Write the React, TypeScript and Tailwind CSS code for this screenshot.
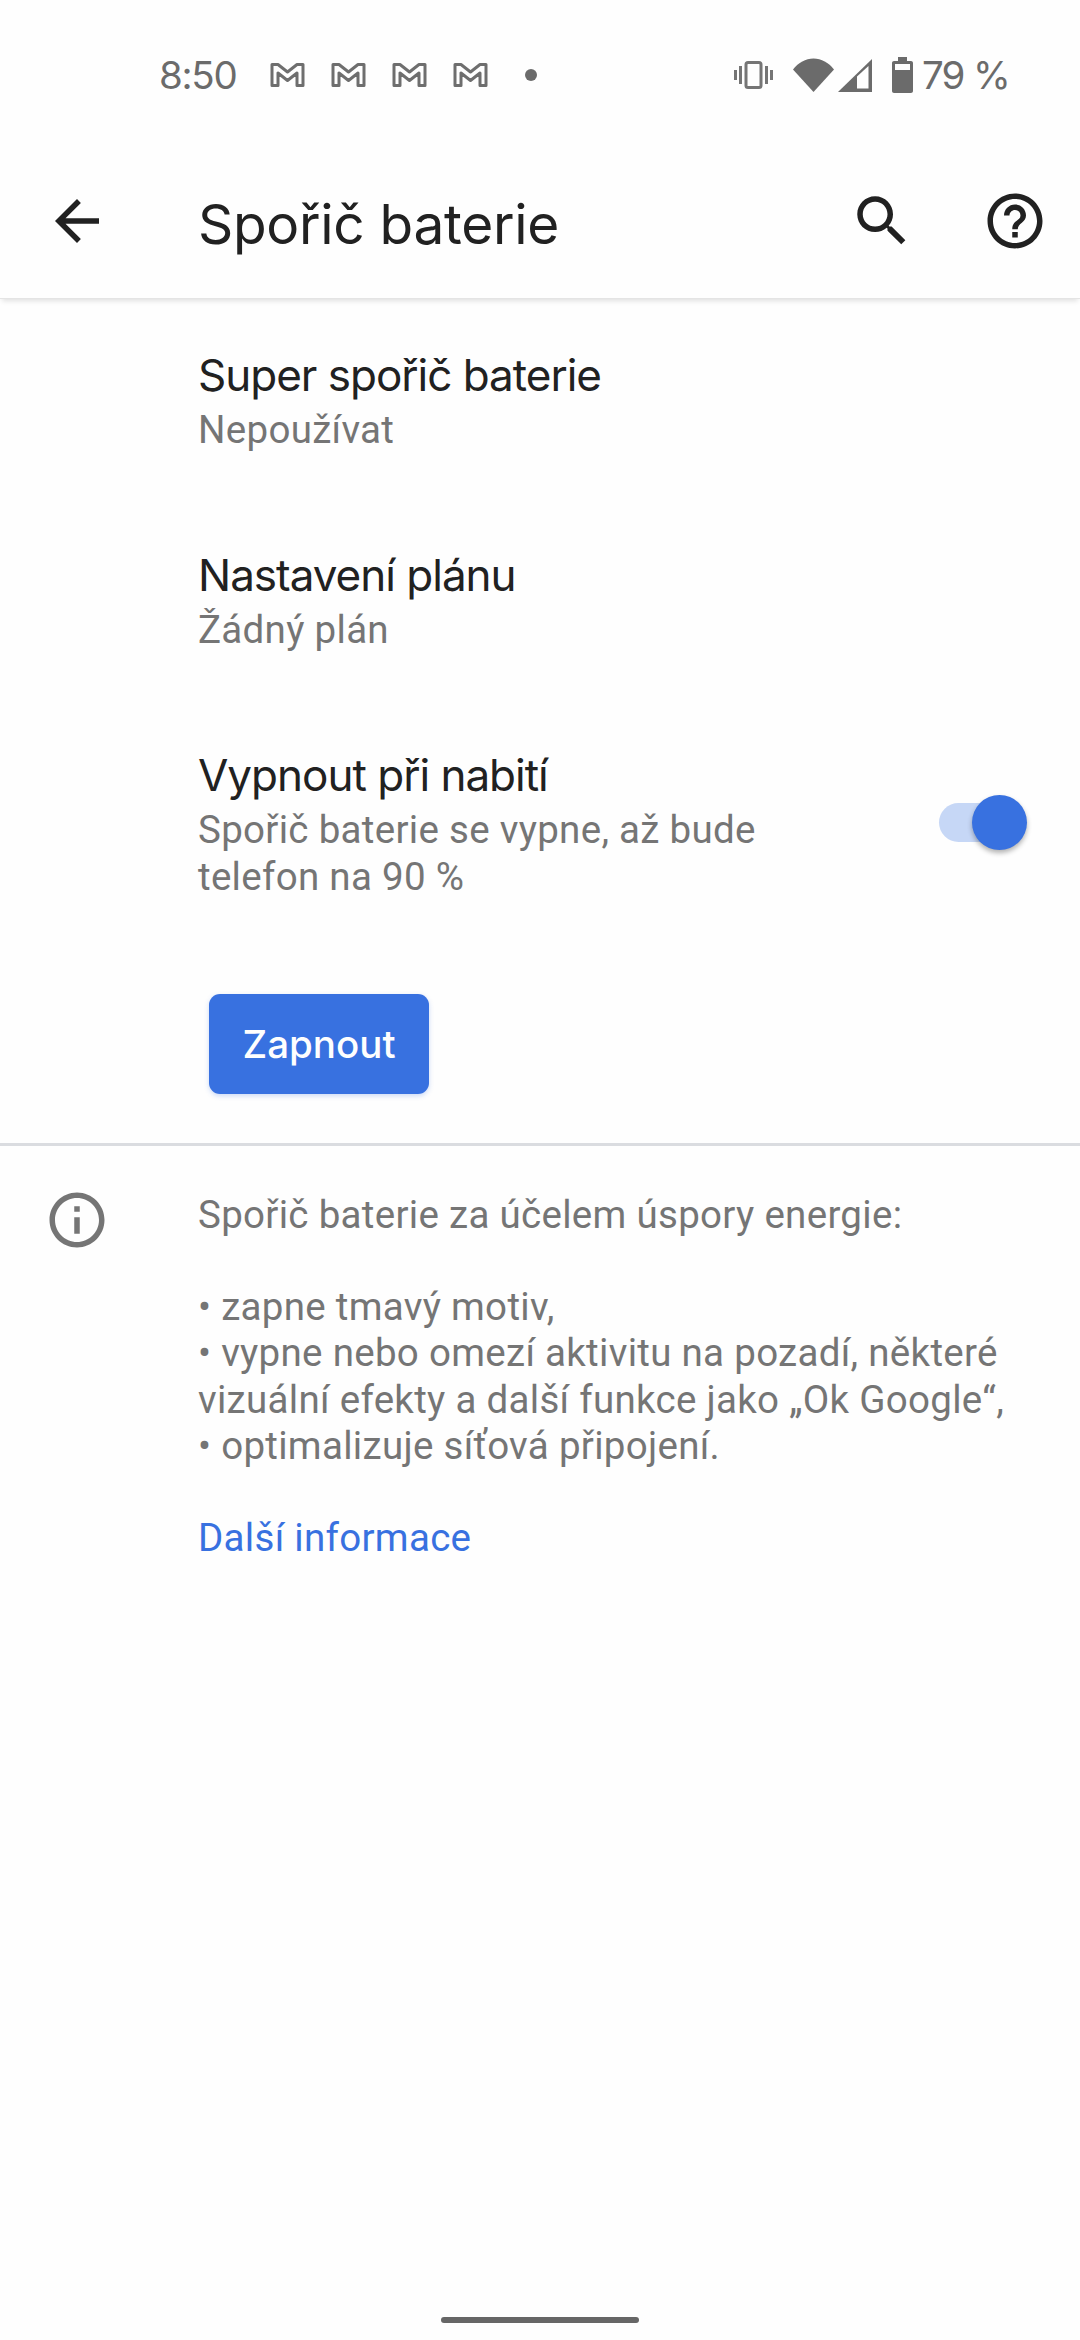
const textFont = "font-['Roboto',sans-serif]";
const bodyText = "text-[38.500px] leading-[46.200px] tracking-[0.3px] text-[#757575]";
const rowTitle = "font-['Inter',sans-serif] text-[44px] leading-[60px] tracking-[-1px] text-[#212121]";

function GmailIcon() {
  return (
    <svg width="35" height="26" viewBox="0 0 35 26" fill="none" className="shrink-0">
      <path
        d="M2 2.5H8L17.5 10L27 2.5H33V23.5H27V11L17.5 18.5L8 11V23.5H2Z"
        stroke="#6e6e6e"
        strokeWidth="3"
        strokeLinejoin="round"
      />
    </svg>
  );
}

function StatusBar() {
  return (
    <div className="h-[144px] pl-[159px] pr-[71px] pt-[57px] flex items-start justify-between text-[#6b6b6b]">
      <div className="flex items-center h-[36px]">
        <span className="font-['Inter',sans-serif] text-[38.500px] leading-[36px] tracking-[-1.300px] w-[111px]">8:50</span>
        <div className="flex gap-[26px]">
          <GmailIcon />
          <GmailIcon />
          <GmailIcon />
          <GmailIcon />
        </div>
        <div className="ml-[37px] w-[12px] h-[12px] rounded-full bg-[#6b6b6b]" />
      </div>
      <div className="flex items-center h-[36px]">
        <svg width="39" height="28" viewBox="0 0 39 28" fill="#757575" className="mr-[20px]">
          <rect x="0" y="9" width="3" height="10" />
          <rect x="5" y="5" width="3" height="18" />
          <rect x="31" y="5" width="3" height="18" />
          <rect x="36" y="9" width="3" height="10" />
          <rect x="12" y="1.5" width="15" height="25" rx="2" fill="none" stroke="#757575" strokeWidth="3" />
        </svg>
        <svg width="41" height="34" viewBox="0 0 41 34" fill="#6b6b6b">
          <path d="M20.5 34L0 11.5C5.5 4.5 12.5 0.5 20.5 0.5S35.500 4.500 41 11.500Z" />
        </svg>
        <svg width="34" height="33" viewBox="0 0 34 33" className="ml-[4px]">
          <path d="M0 33L34 0V33Z" fill="#6b6b6b" />
          <path d="M19 29.500V17.500L30.500 7V29.500Z" fill="#fefefe" />
        </svg>
        <svg width="21" height="36" viewBox="0 0 21 36" fill="#6b6b6b" className="ml-[20px]">
          <path d="M6 0H15V4H19C20.100 4 21 4.900 21 6V34C21 35.100 20.100 36 19 36H2C0.900 36 0 35.100 0 34V6C0 4.900 0.900 4 2 4H6Z" />
          <rect x="3" y="7" width="15" height="6" fill="#fefefe" />
        </svg>
        <span className="ml-[9px] font-['Inter',sans-serif] text-[38.500px] leading-[36px] tracking-[-1.700px] whitespace-nowrap">79 %</span>
      </div>
    </div>
  );
}

function Toolbar() {
  return (
    <div className="h-[155px] -mb-px flex items-center relative shadow-[0_4px_5px_-2px_rgba(0,0,0,0.12)] border-b border-[#e4e4e4]">
      <svg width="66" height="66" viewBox="0 0 24 24" fill="#212121" className="ml-[44px] shrink-0">
        <path d="M20 11H7.830l5.590-5.590L12 4l-8 8 8 8 1.410-1.410L7.830 13H20v-2z" />
      </svg>
      <h1 className="ml-[88px] pt-[5px] font-['Inter',sans-serif] text-[55px] leading-[66px] tracking-[-0.3px] text-[#212121] flex-1">Spořič baterie</h1>
      <svg width="66" height="66" viewBox="0 0 24 24" fill="#212121" className="shrink-0 mr-[66.500px]">
        <path d="M15.500 14h-.790l-.280-.270C15.410 12.590 16 11.110 16 9.500 16 5.910 13.090 3 9.500 3S3 5.910 3 9.500 5.910 16 9.500 16c1.610 0 3.090-.590 4.230-1.570l.270.280v.790l5 4.990L20.490 19l-4.990-5zm-6 0C7.010 14 5 11.990 5 9.500S7.010 5 9.500 5 14 7.010 14 9.500 11.990 14 9.500 14z" />
      </svg>
      <svg width="66" height="66" viewBox="0 0 24 24" fill="#212121" className="shrink-0 mr-[32.500px]">
        <path d="M11 18h2v-2h-2v2zm1-16C6.480 2 2 6.480 2 12s4.480 10 10 10 10-4.480 10-10S17.520 2 12 2zm0 18c-4.410 0-8-3.590-8-8s3.590-8 8-8 8 3.590 8 8-3.590 8-8 8zm0-14c-2.210 0-4 1.790-4 4h2c0-1.100.9-2 2-2s2 .9 2 2c0 2-3 1.750-3 5h2c0-2.250 3-2.500 3-5 0-2.210-1.790-4-4-4z" />
      </svg>
    </div>
  );
}

function SettingRow({ title, summary }: { title: string; summary: string }) {
  return (
    <div className="pl-[198px] pt-[47px] pb-[45px]">
      <div className={rowTitle}>{title}</div>
      <div className={`${textFont} ${bodyText} mt-[2px]`}>{summary}</div>
    </div>
  );
}

export default function App() {
  return (
    <div className="w-[1080px] h-[2340px] bg-[#fefefe] flex flex-col overflow-hidden relative">
      <StatusBar />
      <Toolbar />

      <SettingRow title="Super spořič baterie" summary="Nepoužívat" />
      <SettingRow title="Nastavení plánu" summary="Žádný plán" />

      <div className="pl-[198px] pt-[47px] flex items-center">
        <div className="flex-1">
          <div className={rowTitle}>Vypnout při nabití</div>
          <div className={`${textFont} ${bodyText} mt-[2px]`}>
            Spořič baterie se vypne, až bude<br />telefon na 90 %
          </div>
        </div>
        <div className="relative w-[88px] h-[55px] mr-[53px] flex items-center shrink-0">
          <div className="w-[85px] h-[39px] rounded-full bg-[#c6d7f6]" />
          <div className="absolute right-0 top-0 w-[55px] h-[55px] rounded-full bg-[#3871e0] shadow-[0_3px_5px_rgba(0,0,0,0.3)]" />
        </div>
      </div>

      <button className="ml-[209px] mt-[94px] w-[220px] h-[100px] rounded-[11px] bg-[#3871e0] text-[#fefefe] font-['Inter',sans-serif] font-medium text-[38.500px] leading-[100px] shadow-[0_2px_5px_rgba(56,113,224,0.25)]">
        Zapnout
      </button>

      <div className="mt-[49px] h-[3px] bg-[#dadce0]" />

      <div className="flex pt-[46px]">
        <svg width="66" height="66" viewBox="0 0 24 24" fill="#757575" className="ml-[44px] mt-[-5px] shrink-0">
          <path d="M11 7h2v2h-2zm0 4h2v6h-2zm1-9C6.480 2 2 6.480 2 12s4.480 10 10 10 10-4.480 10-10S17.520 2 12 2zm0 18c-4.410 0-8-3.590-8-8s3.590-8 8-8 8 3.590 8 8-3.590 8-8 8z" />
        </svg>
        <div className={`${textFont} ${bodyText} ml-[88px]`}>
          <p>Spořič baterie za účelem úspory energie:</p>
          <p className="mt-[46.200px]">• zapne tmavý motiv,</p>
          <p>• vypne nebo omezí aktivitu na pozadí, některé</p>
          <p>vizuální efekty a další funkce jako „Ok Google“,</p>
          <p>• optimalizuje síťová připojení.</p>
          <p className="mt-[46.200px] text-[#3871e0]">Další informace</p>
        </div>
      </div>

      <div className="absolute bottom-[17px] left-[441px] w-[198px] h-[6px] rounded-full bg-[#666666]" />
    </div>
  );
}
